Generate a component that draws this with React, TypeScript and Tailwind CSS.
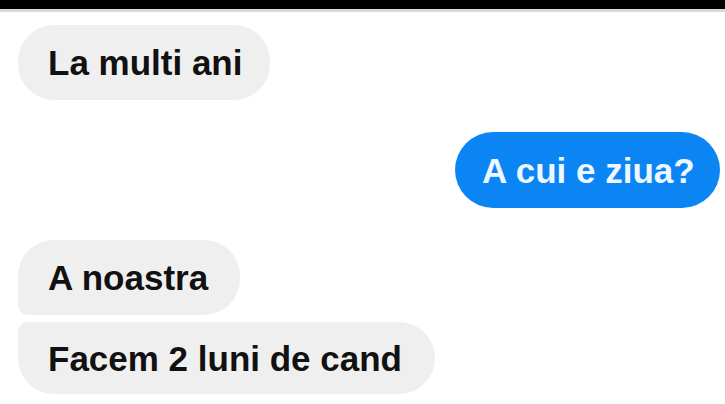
import React from "react";

const font = { fontFamily: '"Liberation Sans", Arial, sans-serif' };

export default function App() {
  return (
    <div className="w-[725px] h-[404px] bg-white overflow-hidden flex flex-col" style={font}>
      <div className="h-[9px] bg-black shrink-0" />
      <div className="h-[3px] bg-[#d9d9d9] shrink-0" />
      <div className="flex flex-col pl-[18px] pr-[5px] pt-[13px]">
        <div className="self-start h-[75px] w-[252px] rounded-[36px] bg-[#efefef] flex items-center pl-[30px] text-[35px] font-bold text-[#111] leading-none">
          La multi ani
        </div>
        <div className="self-end mt-[32px] h-[76px] w-[265px] rounded-[38px] bg-[#0c85f4] flex items-center pl-[27px] text-[35px] font-bold text-[#eef7ff] leading-none">
          A cui e ziua?
        </div>
        <div className="self-start mt-[32px] h-[75px] w-[222px] rounded-tl-[36px] rounded-tr-[36px] rounded-br-[36px] rounded-bl-[10px] bg-[#efefef] flex items-center pl-[30px] text-[35px] font-bold text-[#111] leading-none">
          A noastra
        </div>
        <div className="self-start mt-[7px] h-[72px] w-[417px] rounded-tl-[10px] rounded-tr-[36px] rounded-br-[36px] rounded-bl-[36px] bg-[#efefef] flex items-center pl-[30px] text-[35px] font-bold text-[#111] leading-none">
          Facem 2 luni de cand
        </div>
      </div>
    </div>
  );
}
